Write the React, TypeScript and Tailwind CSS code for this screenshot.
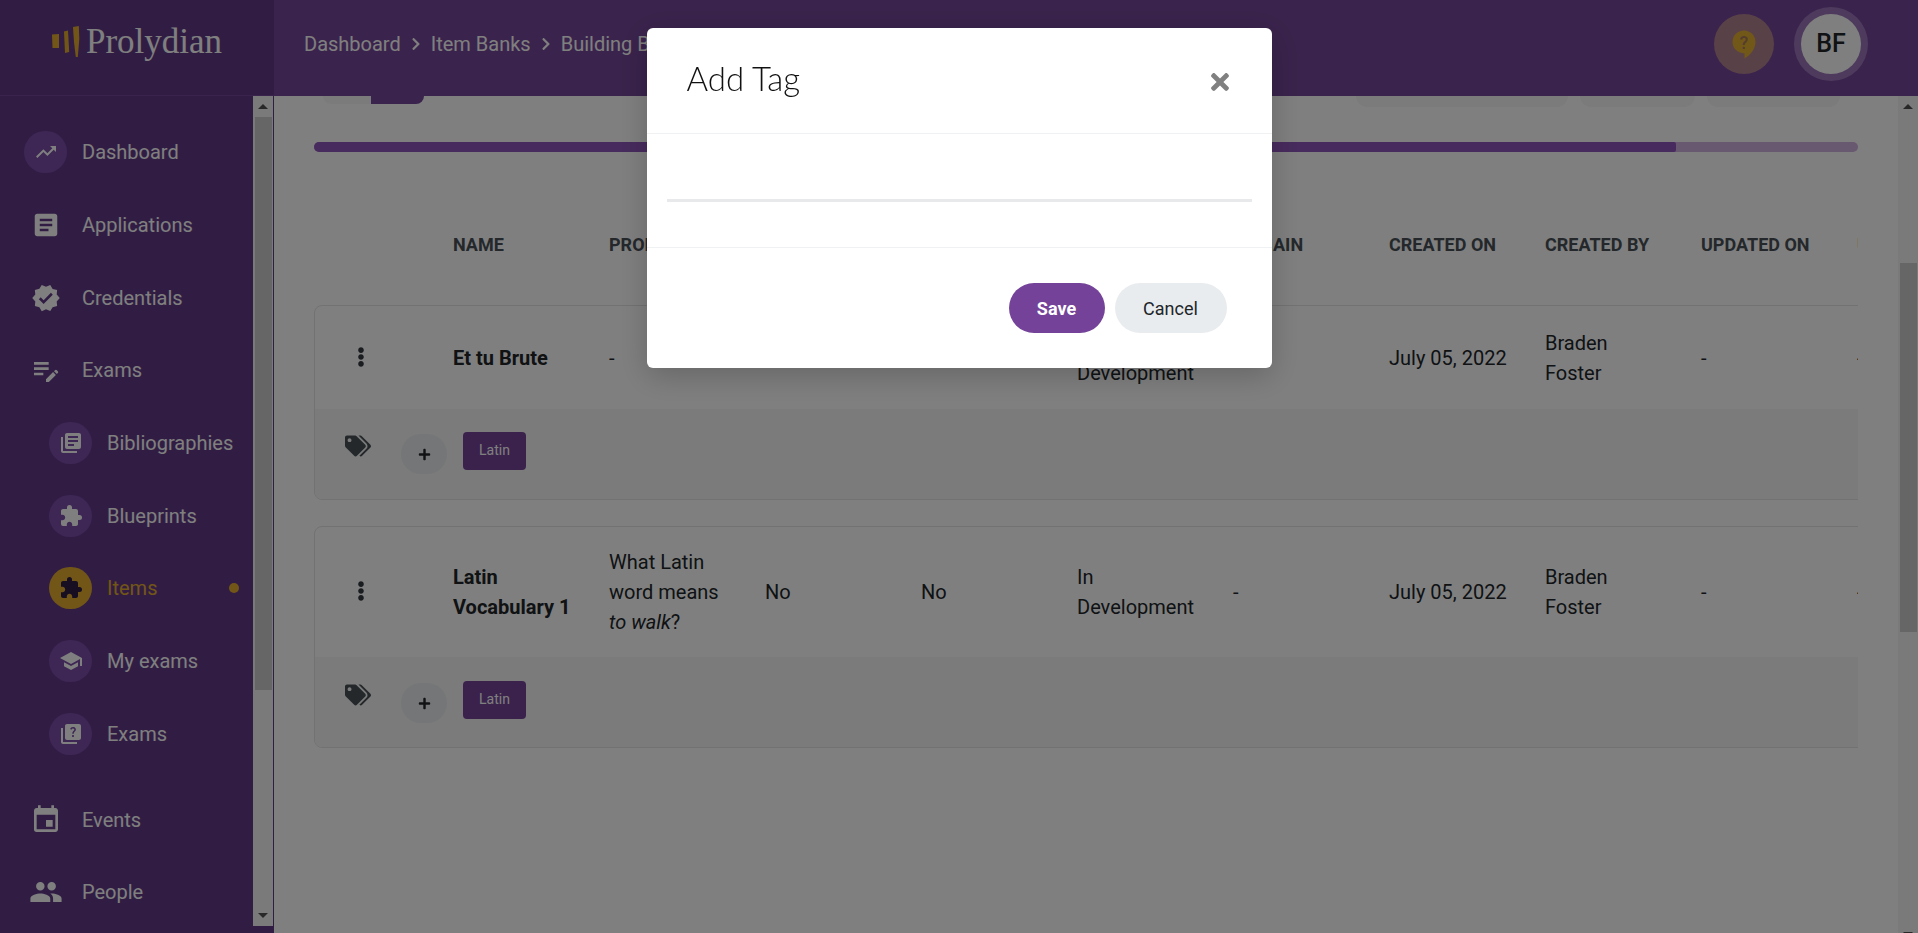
import { ReactNode } from "react";
import {
  MdTrendingUp,
  MdArticle,
  MdVerified,
  MdEditNote,
  MdLibraryBooks,
  MdExtension,
  MdSchool,
  MdQuiz,
  MdEvent,
  MdPeople,
} from "react-icons/md";
import { FaTags, FaTimes, FaEllipsisV, FaPlus, FaChevronRight } from "react-icons/fa";

const font = "font-['Roboto',sans-serif]";

const HelpIcon = () => (
  <svg width="24" height="29" viewBox="0 0 24 29">
    <path
      d="M12 .5C5.600.5.500 5.600.500 12c0 6.100 4.800 11.100 12 11.400V28.500c5-2.600 11-9.400 11-16.500C23.500 5.600 18.400.5 12 .5z"
      fill="#e3b030"
    />
    <text x="12" y="18.500" textAnchor="middle" fontSize="18" fontWeight="500" fill="#a87a5a" fontFamily="Roboto, sans-serif">
      ?
    </text>
  </svg>
);

const LogoMark = () => (
  <svg width="28" height="31" viewBox="0 0 28 31">
    <path d="M0 8.500l7-.5v14H.500z" fill="#e5ad2e" />
    <path d="M12 5.500l4-1 1.200 21.500-4.200 1z" fill="#e5ad2e" />
    <path d="M21 1l5.800-1 .5 13-1.500 18h-2l-1.800-15z" fill="#e5ad2e" />
  </svg>
);

const NavItem = ({
  icon,
  label,
  sub,
  circle,
  active,
}: {
  icon: ReactNode;
  label: string;
  sub?: boolean;
  circle?: boolean;
  active?: boolean;
}) => (
  <div className={`h-[72.700px] flex items-center relative ${sub ? "pl-[49px]" : "pl-[24px]"}`}>
    <div
      className={`w-[43px] h-[42px] rounded-full flex items-center justify-center text-[24px] ${
        active ? "bg-[#e5ad2e] text-[#311d44]" : circle ? "bg-[#7c4dab] text-white" : "text-white"
      }`}
    >
      {icon}
    </div>
    <span className={`ml-[15px] text-[20px] ${active ? "text-[#e5ad2e]" : "text-white"}`}>{label}</span>
    {active && <span className="absolute right-[14px] w-[10px] h-[10px] rounded-full bg-[#e5ad2e]" />}
  </div>
);

const Scrollbar = ({ top, height, className }: { top: number; height: number; className?: string }) => (
  <div className={`w-[20px] shrink-0 bg-[#f5f5f5] flex flex-col items-center ${className ?? ""}`}>
    <div className="h-[21px] shrink-0 flex items-center justify-center">
      <div className="w-0 h-0 border-x-[5px] border-x-transparent border-b-[5px] border-b-[#505050]" />
    </div>
    <div className="flex-1 w-full min-h-0 pl-[2px] pr-[1px]">
      <div className="w-full bg-[#cdcdcd]" style={{ marginTop: top, height }} />
    </div>
    <div className="h-[21px] shrink-0 flex items-center justify-center">
      <div className="w-0 h-0 border-x-[5px] border-x-transparent border-t-[5px] border-t-[#505050]" />
    </div>
  </div>
);

const Cell = ({ children, bold }: { children?: ReactNode; bold?: boolean }) => (
  <div className={`w-[156px] shrink-0 pr-[12px] ${bold ? "font-bold" : ""}`}>{children}</div>
);

const ItemCard = ({
  name,
  prompt,
  flags,
  height,
  stripTop,
}: {
  name: ReactNode;
  prompt: ReactNode;
  flags: string;
  height: number;
  stripTop: string;
}) => (
  <div className="w-[1700px] border border-[#e4e4e4] rounded-[8px] text-[#212529] text-[20px] leading-[30px] overflow-hidden">
    <div className="flex items-center" style={{ height }}>
      <div className="w-[138px] shrink-0 pl-[36px] text-[#343a40] text-[20px] mt-[-2px]">
        <FaEllipsisV />
      </div>
      <Cell bold>{name}</Cell>
      <Cell>{prompt}</Cell>
      <Cell>{flags}</Cell>
      <Cell>{flags}</Cell>
      <Cell>
        In
        <br />
        Development
      </Cell>
      <Cell>-</Cell>
      <Cell>July 05, 2022</Cell>
      <Cell>
        Braden
        <br />
        Foster
      </Cell>
      <Cell>-</Cell>
      <Cell>-</Cell>
    </div>
    <div className={`h-[90px] bg-[#f4f7f4] flex items-start pl-[30px] ${stripTop}`}>
      <FaTags className="text-[#495057] text-[26px] mt-[1px]" />
      <div className="ml-[30px] w-[46px] h-[40px] mt-[2px] rounded-full bg-[#e9ecef] flex items-center justify-center text-[#212529] text-[13px]">
        <FaPlus />
      </div>
      <div className="ml-[16px] w-[63px] h-[38px] rounded-[4px] bg-[#74449a] text-white text-[14px] leading-[36px] text-center">Latin</div>
    </div>
  </div>
);

export default function App() {
  return (
    <div className={`h-[933px] w-[1918px] overflow-hidden flex flex-col bg-white ${font}`}>
      <header className="h-[96px] shrink-0 flex bg-[#744799] text-white">
        <div className="w-[274px] shrink-0 bg-[#623a88] border-b border-[#74499c] flex items-center pl-[52px] pb-[12px]">
          <LogoMark />
          <span className="ml-[6px] font-['Liberation_Serif',serif] text-[35px] leading-none">Prolydian</span>
        </div>
        <nav className="flex items-center pl-[30px] text-[20px] mb-[8px]">
          <span>Dashboard</span>
          <FaChevronRight className="text-[14px] mx-[8px]" />
          <span>Item Banks</span>
          <FaChevronRight className="text-[14px] mx-[8px]" />
          <span>Building Blocks</span>
        </nav>
        <div className="ml-auto flex items-center pr-[57px] mb-[8px]">
          <div className="w-[60px] h-[60px] rounded-full bg-[#b28290] flex items-center justify-center">
            <HelpIcon />
          </div>
          <div className="ml-[27px] w-[60px] h-[60px] rounded-full bg-white ring-[7px] ring-[#9b75bb] flex items-center justify-center text-[#212529] text-[25px] font-medium">
            BF
          </div>
        </div>
      </header>

      <div className="flex-1 min-h-0 flex">
        <aside className="w-[274px] shrink-0 bg-[#623a88] flex items-start">
          <div className="w-[253px] pt-[20px] text-white">
            <NavItem circle icon={<MdTrendingUp />} label="Dashboard" />
            <NavItem icon={<MdArticle className="text-[30px]" />} label="Applications" />
            <NavItem icon={<MdVerified className="text-[30px]" />} label="Credentials" />
            <NavItem icon={<MdEditNote className="text-[32px]" />} label="Exams" />
            <NavItem sub circle icon={<MdLibraryBooks />} label="Bibliographies" />
            <NavItem sub circle icon={<MdExtension />} label="Blueprints" />
            <NavItem sub active icon={<MdExtension />} label="Items" />
            <NavItem sub circle icon={<MdSchool />} label="My exams" />
            <NavItem sub circle icon={<MdQuiz />} label="Exams" />
            <div className="h-[13px]" />
            <NavItem icon={<MdEvent className="text-[32px]" />} label="Events" />
            <NavItem icon={<MdPeople className="text-[34px]" />} label="People" />
          </div>
          <Scrollbar top={0} height={573} className="h-[830px]" />
        </aside>

        <main className="flex-1 min-w-0 flex overflow-hidden">
          <div className="w-[1624px] shrink-0 px-[40px]">
            <div className="w-[1544px] overflow-hidden">
              <div className="h-[8px] relative">
                <div className="absolute left-[9px] top-0 w-[48px] h-[8px] bg-[#f4f7f4] rounded-bl-[40px]" />
                <div className="absolute left-[57px] top-0 w-[53px] h-[8px] bg-[#744799] rounded-br-[24px]" />
              </div>
              <div className="absolute top-[96px] left-[1356px] w-[212px] h-[11px] bg-[#f4f7f4] rounded-b-[30px]" />
              <div className="absolute top-[96px] left-[1580px] w-[115px] h-[11px] bg-[#f4f7f4] rounded-b-[30px]" />
              <div className="absolute top-[96px] left-[1707px] w-[133px] h-[11px] bg-[#f4f7f4] rounded-b-[30px]" />
              <div className="mt-[38px] h-[10px] rounded-full bg-[#d0b0e0] overflow-hidden">
                <div className="h-full w-[1362px] bg-[#8e56bc] rounded-r-[2px]" />
              </div>
              <div className="flex h-[153px] items-center text-[#495057] text-[18px] font-bold whitespace-nowrap pl-[139px] pt-[31px]">
                {["NAME", "PROMPT", "SCORED", "SHUFFLE", "STATUS", "DOMAIN", "CREATED ON", "CREATED BY", "UPDATED ON", "UPDATED BY"].map((h) => (
                  <div key={h} className="w-[156px] shrink-0">
                    {h}
                  </div>
                ))}
              </div>
              <ItemCard name="Et tu Brute" prompt="-" flags="" height={103} stripTop="pt-[23px]" />
              <div className="h-[26px]" />
              <ItemCard
                name={
                  <>
                    Latin
                    <br />
                    Vocabulary 1
                  </>
                }
                prompt={
                  <>
                    What Latin
                    <br />
                    word means
                    <br />
                    <em>to walk</em>?
                  </>
                }
                flags="No"
                height={130}
                stripTop="pt-[24px]"
              />
            </div>
          </div>
          <Scrollbar top={146} height={369} className="h-[849px]" />
        </main>
      </div>

      {/* modal */}
      <div className="fixed inset-0 bg-black/50 flex justify-center items-start pt-[28px]">
        <div className="w-[625px] h-[340px] bg-white rounded-[6px] shadow-[0_8px_30px_rgba(0,0,0,0.2)] flex flex-col">
          <div className="h-[106px] shrink-0 border-b border-[#f0f1f2] flex items-center pl-[40px] pr-[39px] justify-between">
            <h2 className="font-['Lato',sans-serif] font-light text-[33px] text-[#111] mb-[3px]">Add Tag</h2>
            <FaTimes className="text-[#808080] text-[26px] mb-[-2px]" />
          </div>
          <div className="h-[114px] shrink-0 border-b border-[#f0f1f2] px-[20px] pt-[65px]">
            <div className="h-[3px] bg-[#e7e9eb]" />
          </div>
          <div className="flex-1 flex justify-end items-start gap-[10px] pt-[35px] pr-[45px] text-[18px]">
            <button className="w-[96px] h-[50px] rounded-full bg-[#744399] text-white font-bold">Save</button>
            <button className="w-[112px] h-[50px] rounded-full bg-[#e9ecef] text-[#212529]">Cancel</button>
          </div>
        </div>
      </div>
    </div>
  );
}
